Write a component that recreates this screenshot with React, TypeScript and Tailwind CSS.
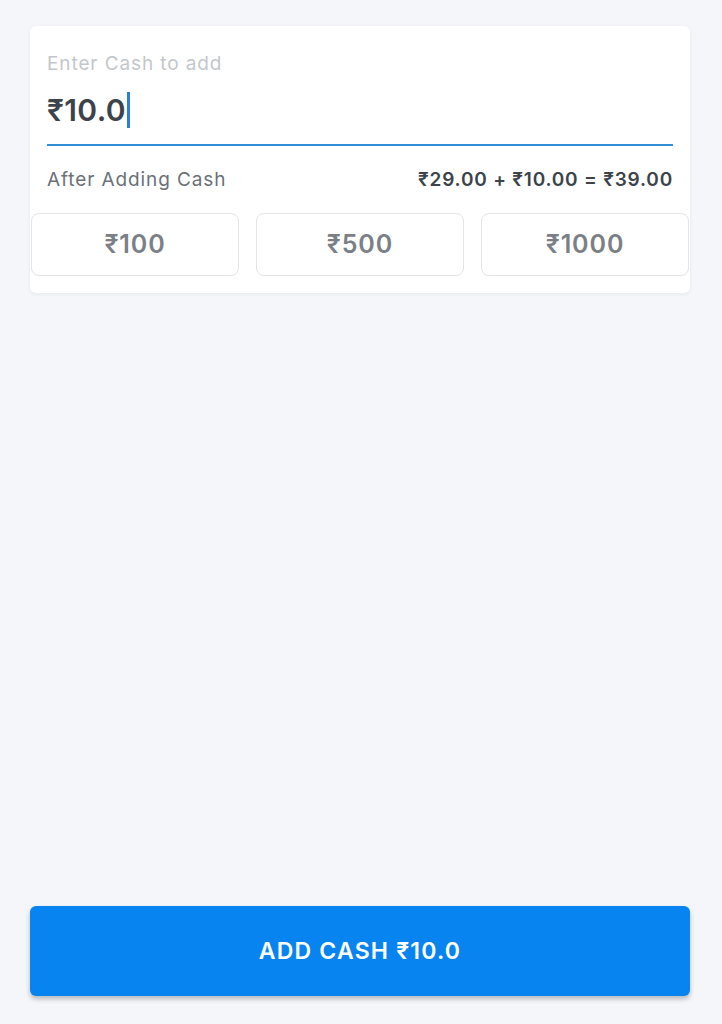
export default function App() {
  const amounts = ['₹100', '₹500', '₹1000']

  return (
    <div
      className="flex h-[1024px] w-full flex-col bg-[#f4f6fa] pl-[30px] pr-[32px] pt-[26px] pb-[28px]"
      style={{ fontFamily: '"Inter", "Noto Sans", sans-serif' }}
    >
      {/* Amount card */}
      <div className="rounded-md bg-white pb-[17px] shadow-[0_1px_4px_rgba(0,0,0,0.06)]">
        <div className="px-[17px] pt-[26px]">
          <div className="text-[19px] leading-[24px] tracking-[0.9px] text-[#c3c7cc]">Enter Cash to add</div>
          <div className="mt-[8px] flex h-[62px] items-center border-b-2 border-[#2f8ed6] pb-[8px]">
            <span className="text-[30px] font-semibold leading-none tracking-[0.4px] text-[#3c434b]">
              ₹10.0
            </span>
            <span className="ml-[1px] h-[36px] w-[3px] bg-[#2a7fd4]" />
          </div>
          <div className="mt-[22px] flex items-center justify-between">
            <span className="text-[19px] leading-[24px] tracking-[0.9px] text-[#6b7178]">After Adding Cash</span>
            <span className="text-[19px] font-semibold leading-[24px] tracking-[0.8px] text-[#3c434b]">
              ₹29.00 + ₹10.00 = ₹39.00
            </span>
          </div>
        </div>
        <div className="mt-[21px] grid grid-cols-3 gap-[17px] px-[1px]">
          {amounts.map((a) => (
            <button
              key={a}
              className="flex h-[63px] items-center justify-center rounded-lg border border-[#e2e4e7] bg-white text-[25px] font-semibold tracking-[0.9px] text-[#7b8086]"
            >
              {a}
            </button>
          ))}
        </div>
      </div>

      <div className="flex-1" />

      {/* Bottom action */}
      <button className="flex h-[90px] w-full items-center justify-center rounded-md bg-[#0784f0] text-[23px] font-semibold tracking-[1.2px] text-white shadow-[0_3px_5px_rgba(0,0,0,0.25)]">
        ADD CASH ₹10.0
      </button>
    </div>
  )
}
